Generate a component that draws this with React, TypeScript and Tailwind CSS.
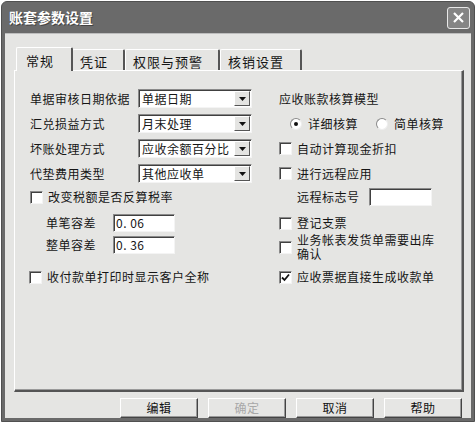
import React from 'react';

const font = { fontFamily: '"Noto Sans CJK SC", "Noto Sans", sans-serif' };

const sunken =
  'bg-white border border-t-[#8a8a8a] border-l-[#8a8a8a] border-r-[#f4f4f4] border-b-[#f4f4f4] shadow-[inset_1px_1px_0_#404040]';

const Checkbox: React.FC<{ checked?: boolean }> = ({ checked }) => (
  <span className={`w-[13px] h-[13px] shrink-0 flex items-center justify-center ${sunken}`}>
    {checked && (
      <svg width="9" height="9" viewBox="0 0 9 9">
        <path d="M1 4.5 L3.5 7 L8 1.5" stroke="#111" strokeWidth="1.8" fill="none" />
      </svg>
    )}
  </span>
);

const Radio: React.FC<{ checked?: boolean }> = ({ checked }) => (
  <span className="w-[12px] h-[12px] shrink-0 rounded-full bg-white border border-t-[#8a8a8a] border-l-[#8a8a8a] border-r-[#eee] border-b-[#eee] flex items-center justify-center">
    {checked && <span className="w-[4px] h-[4px] rounded-full bg-[#111]" />}
  </span>
);

const Select: React.FC<{ value: string }> = ({ value }) => (
  <div className={`w-[114px] h-[19px] flex items-center ${sunken}`}>
    <span className="flex-1 overflow-hidden whitespace-nowrap pl-[3px] leading-[17px]">{value}</span>
    <span className="w-[16px] h-[15px] mr-[1px] shrink-0 bg-[#e4e4e2] border border-t-[#fff] border-l-[#fff] border-r-[#555] border-b-[#555] flex items-center justify-center">
      <svg width="7" height="4" viewBox="0 0 7 4">
        <path d="M0 0 H7 L3.5 4 Z" fill="#111" />
      </svg>
    </span>
  </div>
);

const TextBox: React.FC<{ value?: string; w: string }> = ({ value, w }) => (
  <div className={`${w} h-[18px] flex items-center pl-[2px] leading-none ${sunken}`}>{value}</div>
);

const Button: React.FC<{ label: string; disabled?: boolean }> = ({ label, disabled }) => (
  <div
    className={`w-[78px] h-[20px] flex items-center justify-center bg-[#e6e6e4] border border-t-[#fff] border-l-[#fff] border-r-[#444] border-b-[#444] shadow-[inset_-1px_-1px_0_#9a9a9a] ${
      disabled ? 'text-[#a8a8a8]' : 'text-[#111]'
    }`}
  >
    {label}
  </div>
);

const tabs = [
  { label: '凭证', w: 'w-[53px]' },
  { label: '权限与预警', w: 'w-[95px]' },
  { label: '核销设置', w: 'w-[82px]' },
];

export default function App() {
  return (
    <div className="w-[476px] h-[423px] bg-white p-[1px] text-[12px] tracking-[0.5px] text-[#151515]" style={font}>
      <div className="h-full flex flex-col rounded-t-[6px] bg-[#6a6a6a] border border-[#505050] px-[3px] pb-[3px]">
        {/* title bar */}
        <div className="h-[31px] shrink-0 flex items-center justify-between pl-[4px] pr-[1px]">
          <span className="text-white font-bold text-[14px] tracking-[0px] [text-shadow:1px_1px_0_#444]">账套参数设置</span>
          <span className="w-[23px] h-[22px] rounded-[3px] border border-[#e8e8e8] bg-[#858585] flex items-center justify-center">
            <svg width="13" height="13" viewBox="0 0 13 13">
              <path d="M2 2 L11 11 M11 2 L2 11" stroke="#fff" strokeWidth="2.2" />
            </svg>
          </span>
        </div>

        {/* body */}
        <div className="flex-1 flex flex-col bg-[#e5e5e3] pl-[9px] pr-[7px] pt-[12px] border-t border-[#bdbdbd]">
          {/* tabs */}
          <div className="flex items-end h-[24px] pl-[2px]">
            <div className="relative z-10 w-[57px] h-[24px] -mb-[1px] -mr-[1px] bg-[#e5e5e3] border-l border-t border-[#fff] border-r-2 border-r-[#555] rounded-t-[2px] pl-[9px] pt-[3px] text-[13px] tracking-[1px]">
              常规
            </div>
            {tabs.map((t) => (
              <div
                key={t.label}
                className={`${t.w} h-[21px] border-l border-t border-[#fff] border-r-2 border-r-[#555] rounded-t-[2px] pl-[7px] pt-[2px] text-[13px] tracking-[1px]`}
              >
                {t.label}
              </div>
            ))}
          </div>

          {/* panel */}
          <div className="h-[322px] shrink-0 flex border-t border-l border-[#fff] border-r-2 border-b-2 border-r-[#555] border-b-[#555] shadow-[inset_-1px_-1px_0_#9a9a9a] pl-[15px]">
            {/* left column */}
            <div className="w-[249px] flex flex-col">
              {[
                ['单据审核日期依据', '单据日期'],
                ['汇兑损益方式', '月末处理'],
                ['坏账处理方式', '应收余额百分比'],
                ['代垫费用类型', '其他应收单'],
              ].map(([label, value], i) => (
                <div key={label} className={`flex items-center h-[19px] ${i === 0 ? 'mt-[18px]' : 'mt-[6px]'}`}>
                  <span className="w-[108px] whitespace-nowrap">{label}</span>
                  <Select value={value} />
                </div>
              ))}
              <div className="flex items-center h-[16px] mt-[6px] gap-[5px]">
                <Checkbox />
                <span>改变税额是否反算税率</span>
              </div>
              <div className="flex items-center h-[18px] mt-[9px] pl-[16px]">
                <span className="w-[67px]">单笔容差</span>
                <TextBox value="0. 06" w="w-[62px]" />
              </div>
              <div className="flex items-center h-[18px] mt-[4px] pl-[16px]">
                <span className="w-[67px]">整单容差</span>
                <TextBox value="0. 36" w="w-[62px]" />
              </div>
              <div className="flex items-center h-[18px] mt-[14px] -ml-[1px] gap-[5px]">
                <Checkbox />
                <span>收付款单打印时显示客户全称</span>
              </div>
            </div>

            {/* right column */}
            <div className="flex flex-col">
              <div className="flex items-center h-[19px] mt-[18px]">应收账款核算模型</div>
              <div className="flex items-center h-[19px] mt-[6px] pl-[11px]">
                <Radio checked />
                <span className="ml-[6px] w-[68px]">详细核算</span>
                <Radio />
                <span className="ml-[6px]">简单核算</span>
              </div>
              <div className="flex items-center h-[19px] mt-[6px] gap-[5px]">
                <Checkbox />
                <span>自动计算现金折扣</span>
              </div>
              <div className="flex items-center h-[19px] mt-[6px] gap-[5px]">
                <Checkbox />
                <span>进行远程应用</span>
              </div>
              <div className="flex items-center h-[18px] mt-[5px] pl-[18px]">
                <span className="w-[72px]">远程标志号</span>
                <TextBox w="w-[63px]" />
              </div>
              <div className="flex items-center h-[18px] mt-[8px] gap-[5px]">
                <Checkbox />
                <span>登记支票</span>
              </div>
              <div className="flex items-center h-[30px] mt-[0px] gap-[5px]">
                <Checkbox />
                <span className="w-[140px] leading-[14px]">业务帐表发货单需要出库确认</span>
              </div>
              <div className="flex items-center h-[18px] mt-[6px] gap-[5px]">
                <Checkbox checked />
                <span>应收票据直接生成收款单</span>
              </div>
            </div>
          </div>

          {/* buttons */}
          <div className="flex justify-end gap-[10px] mt-[6px] pr-[2px]">
            <Button label="编辑" />
            <Button label="确定" disabled />
            <Button label="取消" />
            <Button label="帮助" />
          </div>
        </div>
      </div>
    </div>
  );
}
